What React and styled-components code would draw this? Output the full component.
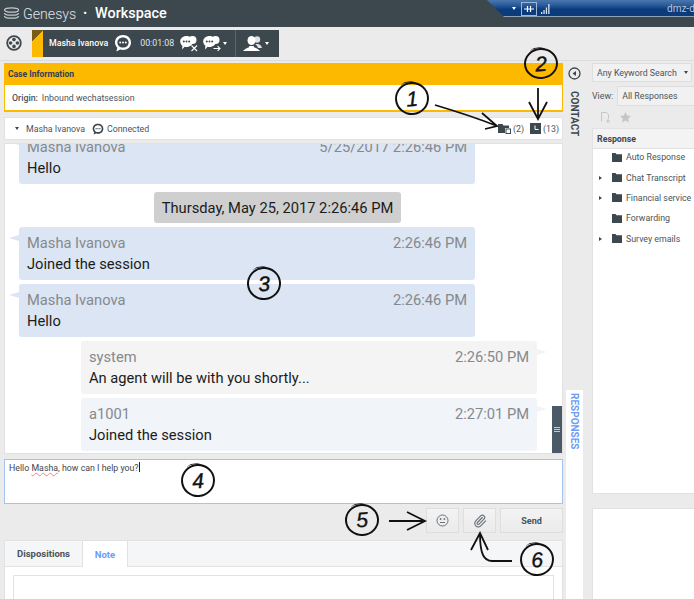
import React from "react";
import styled, { createGlobalStyle } from "styled-components";
import { Paperclip } from "lucide-react";

const Global = createGlobalStyle`
  html, body { margin: 0; padding: 0; background: #ebebeb; }
  body { font-family: Roboto, "Liberation Sans", sans-serif; color: #3d474e; }
  * { box-sizing: border-box; }
`;

const Page = styled.div`
  position: relative;
  width: 694px;
  height: 599px;
  overflow: hidden;
  background: #ebebeb;
`;

const Header = styled.header`
  position: relative;
  height: 27px;
  background: #3d474e;
  display: flex;
  align-items: center;
  padding-left: 3px;
  color: #fff;
`;
const Brand = styled.span`
  font-size: 14.2px;
  font-weight: 300;
  color: #e0e3e5;
  margin-left: 3px;
`;
const Dot = styled.span`
  font-size: 11px;
  margin: 0 8px 0 7px;
`;
const Product = styled.span`
  font-size: 14.4px;
  font-weight: 500;
`;
const Banner = styled.div`
  position: absolute;
  top: 0;
  right: 0;
  width: 207px;
  height: 17px;
  background: linear-gradient(#4a76ad 0, #2a5c9a 30%, #0c3b7c 55%, #0c3b7c 94%, #8fa3b8 94%);
  clip-path: polygon(0 0, 100% 0, 100% 100%, 17px 100%);
  display: flex;
  align-items: center;
  padding-left: 25px;
  color: #fff;
  font-size: 10px;
`;
const BannerPin = styled.span`
  width: 16px;
  height: 14px;
  margin: 0 4px 0 5px;
  border: 1px solid #9db8d8;
  display: flex;
  align-items: center;
  justify-content: center;
`;
const Host = styled.span`
  margin-left: auto;
  color: #b7c6d9;
  width: 27px;
  white-space: nowrap;
  overflow: hidden;
`;

const Toolbar = styled.div`
  height: 34px;
  display: flex;
  align-items: center;
  padding: 0 0 1px 6px;
  border-bottom: 1px solid #dcdcdc;
`;
const ReelSlot = styled.div`
  width: 26px;
  display: flex;
`;
const CallBar = styled.div`
  height: 27px;
  background: #3d474e;
  display: flex;
  align-items: center;
  color: #fff;
`;
const Flag = styled.div`
  width: 11px;
  height: 100%;
  background: linear-gradient(135deg, #7a5c14 0 30%, #fdb900 30%);
`;
const CallSection = styled.div`
  height: 100%;
  display: flex;
  align-items: center;
  padding: ${(p) => p.$pad};
  border-right: ${(p) => (p.$divider ? "1px solid #5b656c" : "none")};
`;
const CallName = styled.span`
  font-size: 8.8px;
  font-weight: 500;
  margin-right: 6px;
`;
const Timer = styled.span`
  font-size: 8.8px;
  color: #dfe8f5;
  margin: 0 6px 0 8px;
`;
const IconGap = styled.span`
  width: 5px;
`;
const Caret = styled.span`
  width: 0;
  height: 0;
  border-left: 2.5px solid transparent;
  border-right: 2.5px solid transparent;
  border-top: 3px solid ${(p) => p.$color || "#fff"};
  display: inline-block;
  margin: ${(p) => p.$margin || "0 0 0 2px"};
`;

const Body = styled.div`
  height: 538px;
  display: grid;
  grid-template-columns: 563px 29px 102px;
`;
const Main = styled.main`
  padding: 2px 0 0 4px;
  display: flex;
  flex-direction: column;
  min-width: 0;
`;

const CaseCard = styled.section`
  height: 49px;
  background: #fff;
  border: 1px solid #fdb900;
  border-top: 0;
  border-bottom-width: 2px;
`;
const CaseTitle = styled.div`
  height: 22px;
  margin: 0 -1px;
  background: #fdb900;
  color: #2f3f58;
  font-size: 8.5px;
  font-weight: 700;
  display: flex;
  align-items: center;
  padding-left: 4px;
`;
const CaseRow = styled.div`
  height: 25px;
  display: flex;
  align-items: center;
  padding-left: 7px;
  font-size: 8.8px;
  color: #4a535a;
`;
const Label = styled.b`
  font-weight: 500;
  margin-right: 4px;
`;

const ContactRow = styled.div`
  height: 23px;
  margin-top: 5px;
  background: #fff;
  border: 1px solid #e2e2e2;
  display: flex;
  align-items: center;
  padding: 0 3px 0 10px;
  font-size: 8.8px;
  color: #4a535a;
`;
const ContactName = styled.span`
  margin: 0 7px 0 7px;
`;
const ContactState = styled.span`
  margin-left: 3px;
`;
const Counters = styled.div`
  margin-left: auto;
  display: flex;
  align-items: center;
  gap: 6px;
`;
const Counter = styled.span`
  display: flex;
  align-items: center;
  gap: 2px;
  font-size: 8.8px;
`;

const Transcript = styled.div`
  position: relative;
  height: 311px;
  margin-top: 3px;
  background: #fff;
  border: 1px solid #e2e2e2;
  display: flex;
  flex-direction: column;
  justify-content: flex-end;
  gap: 4px;
  padding: 0 0 2px;
  overflow: hidden;
`;
const Bubble = styled.div`
  position: relative;
  flex: none;
  width: 456px;
  height: 53px;
  border-radius: 3px;
  margin-left: ${(p) => (p.$agent ? "76px" : "14px")};
  background: ${(p) => p.$bg};
  padding: 6px 8px 0 8px;
  &::before {
    content: "";
    position: absolute;
    top: 8px;
    ${(p) => (p.$agent ? "right: -10px;" : "left: -10px;")}
    border-top: 3px solid transparent;
    border-bottom: 3px solid transparent;
    ${(p) =>
      p.$agent
        ? `border-left: 10px solid ${p.$bg};`
        : `border-right: 10px solid ${p.$bg};`}
  }
`;
const BubbleHead = styled.div`
  display: flex;
  justify-content: space-between;
  color: #85898d;
  font-size: 14.7px;
  line-height: 20px;
`;
const BubbleText = styled.div`
  color: #1b1b1b;
  font-size: 14.7px;
  line-height: 22px;
`;
const DateChip = styled.div`
  flex: none;
  width: 247px;
  height: 31px;
  margin: 4px 0 0 149px;
  background: #cfcfcf;
  border-radius: 3px;
  color: #1b1b1b;
  font-size: 14.7px;
  display: flex;
  align-items: center;
  justify-content: center;
`;
const ScrollHandle = styled.div`
  position: absolute;
  right: 0;
  bottom: 0;
  width: 10px;
  height: 47px;
  background: #4b5a66;
  display: flex;
  flex-direction: column;
  align-items: center;
  justify-content: center;
  gap: 1px;
  & > i {
    width: 6px;
    height: 1px;
    background: #c5ccd1;
  }
`;

const Composer = styled.div`
  height: 45px;
  margin-top: 5px;
  background: #fff;
  border: 1px solid #a3c3f5;
  padding: 2px 4px;
  font-size: 8.8px;
  line-height: 12px;
  color: #3d474e;
`;
const Misspelt = styled.span`
  text-decoration: underline wavy #f08080 1px;
`;
const TextCursor = styled.span`
  display: inline-block;
  width: 1px;
  height: 10px;
  background: #222;
  vertical-align: -1px;
`;

const Actions = styled.div`
  height: 25px;
  margin-top: 4px;
  display: flex;
  justify-content: flex-end;
  gap: 4px;
`;
const ActionButton = styled.button`
  width: ${(p) => p.$w}px;
  height: 25px;
  padding: 0;
  border: 1px solid #dedede;
  background: linear-gradient(#f3f3f3, #ebebeb);
  color: #4a535a;
  font: 700 9px Roboto, sans-serif;
  display: flex;
  align-items: center;
  justify-content: center;
`;

const TabsCard = styled.section`
  flex: 1;
  margin-top: 7px;
  background: #fff;
  border: 1px solid #e2e2e2;
  border-bottom: 0;
  display: flex;
  flex-direction: column;
`;
const TabRow = styled.div`
  height: 26px;
  flex: none;
  background: #f5f6f8;
  border-bottom: 1px solid #e2e2e2;
  display: flex;
`;
const Tab = styled.div`
  height: ${(p) => (p.$active ? "26px" : "25px")};
  width: ${(p) => p.$w}px;
  font-size: 9.5px;
  font-weight: 700;
  display: flex;
  align-items: center;
  justify-content: center;
  background: ${(p) => (p.$active ? "#fff" : "transparent")};
  color: ${(p) => (p.$active ? "#6d9cf5" : "#4a535a")};
  border-right: 1px solid #e2e2e2;
`;
const NoteArea = styled.div`
  flex: 1;
  margin: 8px 8px 0;
  border: 1px solid #e2e2e2;
  border-bottom: 0;
`;

const Rail = styled.aside`
  position: relative;
  padding-top: 4px;
  display: flex;
  flex-direction: column;
  align-items: center;
`;
const RailLabel = styled.div`
  writing-mode: vertical-rl;
  font-size: 10px;
  font-weight: 700;
  color: ${(p) => (p.$active ? "#6d9cf5" : "#3d474e")};
`;
const RailTab = styled.div`
  position: absolute;
  top: 329px;
  left: 3px;
  bottom: 0;
  width: 17px;
  background: #fff;
  display: flex;
  justify-content: center;
  padding-top: 3px;
`;
const RailToggle = styled.div`
  height: 26px;
  margin-right: 6px;
`;
const RailContact = styled.div`
  margin-right: 6px;
`;

const Side = styled.aside`
  padding-top: 2px;
  display: flex;
  flex-direction: column;
  min-width: 0;
`;
const KeywordSelect = styled.div`
  width: 100px;
  height: 19px;
  background: #f1f1f1;
  border: 1px solid #dedede;
  display: flex;
  align-items: center;
  justify-content: space-between;
  padding: 0 3px 0 4px;
  font-size: 8.8px;
  color: #4a535a;
`;
const ViewRow = styled.div`
  height: 20px;
  margin-top: 4px;
  display: flex;
  align-items: center;
  font-size: 8.8px;
  color: #4a535a;
`;
const ViewInput = styled.div`
  flex: 1;
  height: 20px;
  margin-left: 4px;
  padding-left: 4px;
  background: #f1f1f1;
  border: 1px solid #dedede;
  border-right: 0;
  display: flex;
  align-items: center;
`;
const IconRow = styled.div`
  height: 22px;
  display: flex;
  align-items: center;
  gap: 9px;
  padding-left: 8px;
`;
const ResponsePanel = styled.div`
  height: 366px;
  background: #fff;
  border: 1px solid #e2e2e2;
  border-right: 0;
`;
const ResponseHead = styled.div`
  height: 20px;
  background: #f3f3f3;
  border-bottom: 1px solid #e2e2e2;
  display: flex;
  align-items: center;
  padding-left: 4px;
  font-size: 8.8px;
  font-weight: 700;
  color: #3d474e;
`;
const TreeList = styled.ul`
  list-style: none;
  margin: -2px 0 0;
  padding: 0;
`;
const TreeRow = styled.li`
  height: 20.4px;
  display: flex;
  align-items: center;
  font-size: 8.8px;
  color: #4a535a;
  white-space: nowrap;
`;
const Twisty = styled.span`
  width: 19px;
  padding-left: 6px;
  display: flex;
  &::before {
    content: "";
    display: ${(p) => (p.$open ? "block" : "none")};
    border-top: 2.5px solid transparent;
    border-bottom: 2.5px solid transparent;
    border-left: 3px solid #3d474e;
  }
`;
const SecondPanel = styled.div`
  flex: 1;
  margin-top: 14px;
  background: #fff;
  border-left: 1px solid #e2e2e2;
  border-top: 1px solid #e2e2e2;
`;

/* the hand-drawn callouts sit on top of the screenshot */
const Callout = styled.div`
  position: absolute;
  left: ${(p) => p.$x}px;
  top: ${(p) => p.$y}px;
  width: 34px;
  height: ${(p) => p.$h || 33}px;
  border: 2px solid #111;
  border-radius: 50%;
  color: #111;
  font: italic 400 21px "Liberation Sans", sans-serif;
  -webkit-text-stroke: 0.4px #111;
  display: flex;
  align-items: center;
  justify-content: center;
  transform: rotate(-4deg);
  &::before {
    content: "";
    position: absolute;
    top: -3px;
    left: 5px;
    width: 16px;
    height: 8px;
    border-top: 1.500px solid #111;
    border-radius: 50%;
  }
`;
const Arrows = styled.svg`
  position: absolute;
  inset: 0;
  pointer-events: none;
`;

const Folder = () => (
  <svg width="13" height="11" viewBox="0 0 13 11">
    <path d="M0 1h4.500l1 1.400H11V5H7v5H0z" fill="#3d474e" />
    <rect x="8" y="6" width="4.500" height="4.500" fill="none" stroke="#3d474e" />
  </svg>
);

const Reel = () => (
  <svg width="16" height="16" viewBox="0 0 16 16">
    <circle cx="8" cy="8" r="6.800" fill="none" stroke="#3d474e" strokeWidth="1.800" />
    <circle cx="8" cy="4.600" r="1.800" fill="#3d474e" />
    <circle cx="8" cy="11.400" r="1.800" fill="#3d474e" />
    <circle cx="4.600" cy="8" r="1.800" fill="#3d474e" />
    <circle cx="11.400" cy="8" r="1.800" fill="#3d474e" />
  </svg>
);

const ChatBadge = ({ size = 18, fill = "#fff", dots = "#3d474e" }) => (
  <svg width={size} height={size} viewBox="0 0 18 18">
    <path d="M9 1c4.600 0 8 3 8 7.500S13.600 16 9 16c-1 0-1.900-.1-2.800-.4L2.400 17.400l.9-3.700C1.900 12.300 1 10.500 1 8.500 1 4 4.400 1 9 1z" fill={fill} />
    <path d="M9 3.400c3.300 0 5.600 2.200 5.600 5.100s-2.300 5.100-5.600 5.100-5.600-2.200-5.600-5.100S5.700 3.400 9 3.400z" fill={dots} />
    <circle cx="6.200" cy="8.500" r="1" fill={fill} />
    <circle cx="9" cy="8.500" r="1" fill={fill} />
    <circle cx="11.800" cy="8.500" r="1" fill={fill} />
  </svg>
);

const ChatAction = ({ mark }) => (
  <svg width="18" height="17" viewBox="0 0 18 17">
    <circle cx="12.500" cy="5" r="4" fill="#fff" />
    <path d="M6.500 1C10.100 1 13 3.400 13 6.500S10.100 12 6.500 12c-.7 0-1.300-.1-1.900-.2L2 14.500l.4-3.700C1.100 9.700.2 8.200.2 6.500.2 3.400 2.900 1 6.500 1z" fill="#fff" />
    <circle cx="3.800" cy="6.500" r="1" fill="#3d474e" />
    <circle cx="6.500" cy="6.500" r="1" fill="#3d474e" />
    <circle cx="9.200" cy="6.500" r="1" fill="#3d474e" />
    {mark === "x" ? (
      <path d="M11.500 10.500l5.500 5.500m0-5.500L11.500 16" stroke="#fff" strokeWidth="1.100" />
    ) : (
      <path d="M10.500 13.500h6.500m-2.400-2.300l2.400 2.300-2.400 2.300" stroke="#fff" strokeWidth="1.100" fill="none" />
    )}
  </svg>
);

const Agents = () => (
  <svg width="19" height="17" viewBox="0 0 19 17">
    <circle cx="14" cy="4.500" r="3.200" fill="#dfe2e4" />
    <path d="M12 9h3c2 .5 3.500 1.800 4 4h-4c-.5-1.800-1.500-3-3-4z" fill="#dfe2e4" />
    <ellipse cx="8.500" cy="5.500" rx="4" ry="4.500" fill="#fff" />
    <path d="M0 16c1-1.500 3.500-3 5.500-3.600.6-.2.8-.8.8-1.400h4.400c0 .6.200 1.200.8 1.400 2 .6 4.500 2.100 5.500 3.600z" fill="#fff" />
  </svg>
);

const TreeFolder = () => (
  <svg width="10" height="9" viewBox="0 0 10 9" style={{ marginRight: 4 }}>
    <path d="M0 0h3.500l1 1.200H10V9H0z" fill="#3d474e" />
  </svg>
);

const treeItems = [
  { name: "Auto Response", open: false },
  { name: "Chat Transcript", open: true },
  { name: "Financial service", open: true },
  { name: "Forwarding", open: false },
  { name: "Survey emails", open: true },
];

export default function App() {
  return (
    <Page>
      <Global />
      <Header>
        <svg width="17" height="14" viewBox="0 0 17 14">
          <g fill="none" stroke="#c4c9cc" strokeWidth="1.300">
            <ellipse cx="8.500" cy="3" rx="7" ry="2.200" />
            <path d="M1.500 6c0 1.200 3.100 2.200 7 2.200s7-1 7-2.200" />
            <path d="M1.500 9c0 1.200 3.100 2.200 7 2.200s7-1 7-2.200" />
          </g>
        </svg>
        <Brand>Genesys</Brand>
        <Dot>•</Dot>
        <Product>Workspace</Product>
        <Banner>
          <Caret $margin="0" />
          <BannerPin>
            <svg width="10" height="8" viewBox="0 0 10 8">
              <path d="M0 4h3M7 4h3M3.500 1v6M6.500 1v6M3.500 4h3" stroke="#fff" strokeWidth="1.200" />
            </svg>
          </BannerPin>
          <svg width="9" height="10" viewBox="0 0 9 10">
            <path d="M0 8h1.300v2H0zM2.400 6h1.300v4H2.400zM4.800 3.500h1.300V10H4.800zM7.200 0h1.300v10H7.200z" fill="#d8e2ee" />
          </svg>
          <Host>dmz-dc</Host>
        </Banner>
      </Header>
      <Toolbar>
        <ReelSlot>
          <Reel />
        </ReelSlot>
        <CallBar>
          <Flag />
          <CallSection $divider $pad="0 8px 0 6px">
            <CallName>Masha Ivanova</CallName>
            <ChatBadge />
            <Timer>00:01:08</Timer>
            <ChatAction mark="x" />
            <IconGap />
            <ChatAction mark="arrow" />
            <Caret />
          </CallSection>
          <CallSection $pad="0 10px 0 7px">
            <Agents />
            <Caret $margin="0 0 0 3px" />
          </CallSection>
        </CallBar>
      </Toolbar>
      <Body>
        <Main>
          <CaseCard>
            <CaseTitle>Case Information</CaseTitle>
            <CaseRow>
              <Label>Origin:</Label> Inbound wechatsession
            </CaseRow>
          </CaseCard>
          <ContactRow>
            <Caret $color="#3d474e" $margin="0" />
            <ContactName>Masha Ivanova</ContactName>
            <ChatBadge size={12} fill="#3d474e" dots="#fff" />
            <ContactState>Connected</ContactState>
            <Counters>
              <Counter>
                <Folder /> (2)
              </Counter>
              <Counter>
                <svg width="11" height="11" viewBox="0 0 11 11">
                  <rect width="11" height="11" fill="#3d474e" />
                  <path d="M5 2.500v4h3.500" stroke="#fff" fill="none" strokeWidth="1" />
                </svg>
                (13)
              </Counter>
            </Counters>
          </ContactRow>
          <Transcript>
            <Bubble $bg="#dbe5f3">
              <BubbleHead>
                <span>Masha Ivanova</span>
                <span>5/25/2017 2:26:46 PM</span>
              </BubbleHead>
              <BubbleText>Hello</BubbleText>
            </Bubble>
            <DateChip>Thursday, May 25, 2017 2:26:46 PM</DateChip>
            <Bubble $bg="#dbe5f3">
              <BubbleHead>
                <span>Masha Ivanova</span>
                <span>2:26:46 PM</span>
              </BubbleHead>
              <BubbleText>Joined the session</BubbleText>
            </Bubble>
            <Bubble $bg="#dbe5f3">
              <BubbleHead>
                <span>Masha Ivanova</span>
                <span>2:26:46 PM</span>
              </BubbleHead>
              <BubbleText>Hello</BubbleText>
            </Bubble>
            <Bubble $bg="#f4f4f4" $agent>
              <BubbleHead>
                <span>system</span>
                <span>2:26:50 PM</span>
              </BubbleHead>
              <BubbleText>An agent will be with you shortly...</BubbleText>
            </Bubble>
            <Bubble $bg="#f1f4f9" $agent>
              <BubbleHead>
                <span>a1001</span>
                <span>2:27:01 PM</span>
              </BubbleHead>
              <BubbleText>Joined the session</BubbleText>
            </Bubble>
            <ScrollHandle>
              <i />
              <i />
              <i />
            </ScrollHandle>
          </Transcript>
          <Composer>
            Hello <Misspelt>Masha</Misspelt>, how can I help you?
            <TextCursor />
          </Composer>
          <Actions>
            <ActionButton $w={33}>
              <svg width="13" height="13" viewBox="0 0 13 13" fill="none" stroke="#6b7278">
                <circle cx="6.500" cy="6.500" r="5.500" />
                <path d="M4 8.500h5" />
                <circle cx="4.600" cy="5" r=".6" fill="#6b7278" />
                <circle cx="8.400" cy="5" r=".6" fill="#6b7278" />
              </svg>
            </ActionButton>
            <ActionButton $w={33}>
              <Paperclip size={14} color="#6b7278" strokeWidth={2} />
            </ActionButton>
            <ActionButton $w={63}>Send</ActionButton>
          </Actions>
          <TabsCard>
            <TabRow>
              <Tab $w={78}>Dispositions</Tab>
              <Tab $w={45} $active>
                Note
              </Tab>
            </TabRow>
            <NoteArea />
          </TabsCard>
        </Main>
        <Rail>
          <RailToggle>
            <svg width="13" height="13" viewBox="0 0 13 13">
              <circle cx="6.500" cy="6.500" r="5.500" fill="none" stroke="#3d474e" strokeWidth="1.300" />
              <path d="M8 4v5L4.500 6.500z" fill="#3d474e" />
            </svg>
          </RailToggle>
          <RailContact>
            <RailLabel>CONTACT</RailLabel>
          </RailContact>
          <RailTab>
            <RailLabel $active>RESPONSES</RailLabel>
          </RailTab>
        </Rail>
        <Side>
          <KeywordSelect>
            Any Keyword Search
            <Caret $color="#3d474e" />
          </KeywordSelect>
          <ViewRow>
            View:
            <ViewInput>All Responses</ViewInput>
          </ViewRow>
          <IconRow>
            <svg width="11" height="12" viewBox="0 0 11 12" fill="none" stroke="#c3c6c8">
              <path d="M1.500 10.500v-9h5l2 2v4M8 8v4M6 10h4" />
            </svg>
            <svg width="11" height="11" viewBox="0 0 11 11">
              <path d="M5.500 0l1.700 3.600 3.800.5-2.800 2.600.7 3.800-3.400-1.900-3.400 1.900.7-3.800L0 4.100l3.800-.5z" fill="#c3c6c8" />
            </svg>
          </IconRow>
          <ResponsePanel>
            <ResponseHead>Response</ResponseHead>
            <TreeList>
              {treeItems.map((item) => (
                <TreeRow key={item.name}>
                  <Twisty $open={item.open} />
                  <TreeFolder />
                  {item.name}
                </TreeRow>
              ))}
            </TreeList>
          </ResponsePanel>
          <SecondPanel />
        </Side>
      </Body>
      <Callout $x={395} $y={82}>1</Callout>
      <Callout $x={524} $y={48} $h={31}>2</Callout>
      <Callout $x={247} $y={267}>3</Callout>
      <Callout $x={181} $y={464}>4</Callout>
      <Callout $x={345} $y={504} $h={32}>5</Callout>
      <Callout $x={520} $y={543}>6</Callout>
      <Arrows width="694" height="599" viewBox="0 0 694 599" fill="none" stroke="#111" strokeWidth="1.800">
        <path d="M435 105c20 6 42 13 62 21M482 113l15 13-12 3" />
        <path d="M538 88v30M529 102l9 17 9-17" />
        <path d="M389 521h36M407 512l18 9-18 9" />
        <path d="M512 561h-20c-8 0-12-7-12-27M471 550l9-17 8 17" />
      </Arrows>
    </Page>
  );
}
